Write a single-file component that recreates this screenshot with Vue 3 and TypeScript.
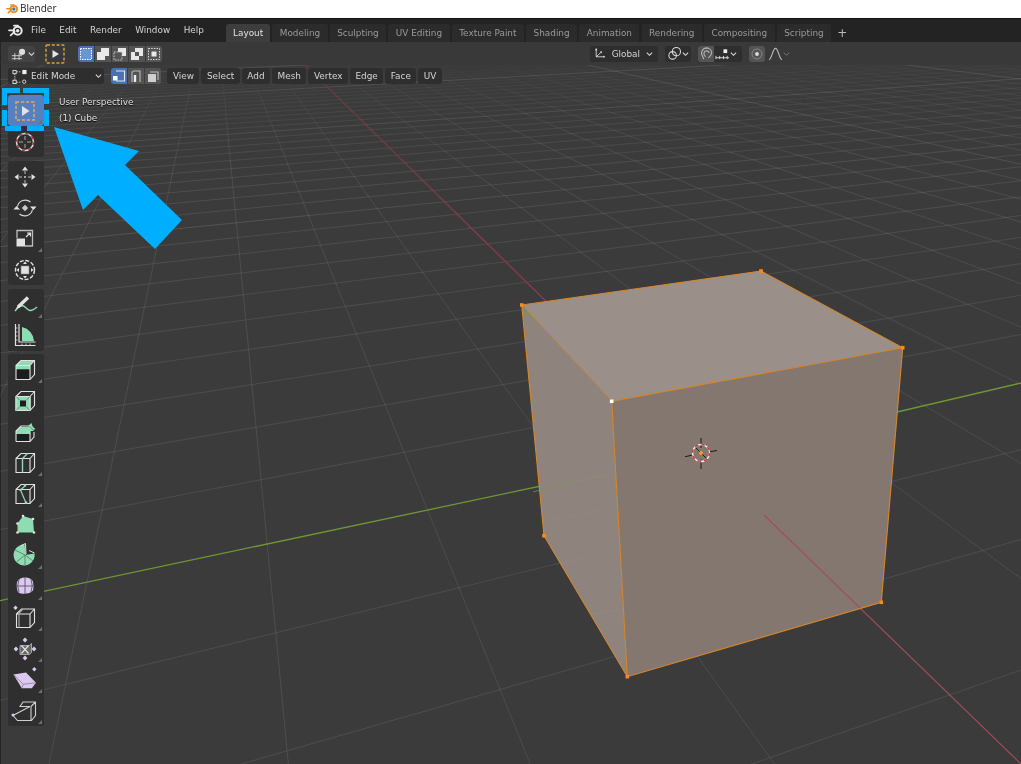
<script setup lang="ts">
// ground plane to screen homography, fitted on the axes and grid crossings
const project = (u: number, v: number) => {
  const w = 1 + 0.0504 * u - 0.1126 * v
  return { x: (701 + 158 * u - 23.98 * v) / w, y: (453 - 3.5 * u + 2.36 * v) / w, w }
}

const buildGrid = () => {
  const buckets = new Map<string, string[]>()
  const add = (a: { x: number; y: number }, b: { x: number; y: number }, o: number) => {
    if (o < 0.012) return
    const key = o.toFixed(3)
    if (!buckets.has(key)) buckets.set(key, [])
    buckets.get(key)!.push(`M${a.x.toFixed(1)} ${a.y.toFixed(1)}L${b.x.toFixed(1)} ${b.y.toFixed(1)}`)
  }
  const alpha = (w: number, major: boolean) => {
    if (major) return Math.round(Math.max(0.05, 0.12 - w * 0.005) * 50) / 50
    const t = Math.min(1, Math.max(0, (w - 2.6) / 3))
    return Math.round(0.085 * (1 - t) * 100) / 100
  }
  for (let a = -15; a <= 120; a++) {
    for (let b = -130; b <= 7; b++) {
      const p = project(a, b)
      if (p.w < 0.2 || p.w > 9) continue
      const q1 = project(a + 1, b)
      const q2 = project(a, b + 1)
      if (q1.w > 0.2 && b !== 0) add(p, q1, alpha((p.w + q1.w) / 2, b % 10 === 0))
      if (q2.w > 0.2 && a !== 0) add(p, q2, alpha((p.w + q2.w) / 2, a % 10 === 0))
    }
  }
  return [...buckets].map(([o, segs]) => ({ d: segs.join(''), o }))
}

const grid = buildGrid()

const menus = ['File', 'Edit', 'Render', 'Window', 'Help']
const tabs = ['Layout', 'Modeling', 'Sculpting', 'UV Editing', 'Texture Paint', 'Shading', 'Animation', 'Rendering', 'Compositing', 'Scripting']
const editMenus = ['View', 'Select', 'Add', 'Mesh', 'Vertex', 'Edge', 'Face', 'UV']

const W = '#e2e2e2'
const G = '#90dcb2'
const P = '#dac8ee'
const wire = (c = W) => `<g fill="none" stroke="${c}" stroke-width="1.1"><path d="M6 10.5h14v14H6zM6 10.5l5-5h13.5v14l-4.5 5M20 10.5l4.5-5"/></g>`
const dot = (x: number, y: number, c = W, r = 1.3) => `<circle cx="${x}" cy="${y}" r="${r}" fill="${c}"/>`
const diamond = (x: number, y: number, c = P, r = 2.4) => `<path d="M${x} ${y - r}l${r} ${r}-${r} ${r}-${r}-${r}z" fill="${c}"/>`

interface Tool {
  icon: string
  more?: boolean
  active?: boolean
}

const groups: Tool[][] = [
  [
    {
      active: true,
      more: true,
      icon: `<rect x="6" y="6" width="18" height="18" fill="none" stroke="#e0a95a" stroke-width="1.5" stroke-dasharray="3.2 1.8"/><path d="M12 10l7.5 5-7.5 5z" fill="#e4e4e4"/>`,
    },
    {
      icon: `<circle cx="15" cy="15" r="8.5" fill="none" stroke="#dcdcdc" stroke-width="1.5"/><circle cx="15" cy="15" r="8.5" fill="none" stroke="#a83a3a" stroke-width="1.6" stroke-dasharray="3 3.7"/><path d="M15 9v4M15 17v4M9 15h4M17 15h4" stroke="#aaa" stroke-width="1"/>`,
    },
  ],
  [
    {
      icon: `<path d="M15 4.5l3 4h-6zM15 25.5l3-4h-6zM4.5 15l4-3v6zM25.5 15l-4-3v6z" fill="${W}"/><path d="M15 9v3M15 18v3M9 15h3M18 15h3" stroke="#bbb" stroke-width="1"/>${dot(15, 15, '#ccc', 1)}`,
    },
    {
      icon: `<path d="M7.5 13.5a8 8 0 0 1 13-4.5M22.5 16.5a8 8 0 0 1-13 4.5" fill="none" stroke="#d8d8d8" stroke-width="1.2"/><path d="M23.5 17l-3.5-3.5h6.5zM6.5 13l3.5 3.5H3.5z" fill="${W}"/>${diamond(15, 15, '#c8c8c8', 3.2)}`,
    },
    {
      more: true,
      icon: `<path d="M7 14V6.5h15.5V22H15" fill="none" stroke="#bdbdbd" stroke-width="1.3"/><rect x="6.5" y="14.5" width="8.5" height="8" fill="${W}"/><path d="M16 13l4-4M17 9h3.5v3.5" fill="none" stroke="${W}" stroke-width="1.2"/>`,
    },
    {
      icon: `<circle cx="15" cy="15" r="9.5" fill="none" stroke="#e2e2e2" stroke-width="1.4" stroke-dasharray="4 1.6"/><rect x="11" y="11" width="8" height="8" fill="${W}" stroke="#888" stroke-width=".6"/><path d="M15 6.5l2 2.5h-4zM15 23.5l2-2.5h-4zM6.5 15l2.5-2v4zM23.5 15l-2.5-2v4z" fill="${W}"/>`,
    },
  ],
  [
    {
      more: true,
      icon: `<path d="M5 21C8 17 12 14 15 17S20 23 27 17" fill="none" stroke="${G}" stroke-width="1.4"/><path d="M8 17L18 7.5" stroke="${W}" stroke-width="3.4"/><path d="M5.5 19.5l2-3.5 1.6 1.6z" fill="${W}"/>`,
    },
    {
      icon: `<path d="M12 6A15 15 0 0 1 24 20H12z" fill="${G}"/><path d="M5.5 3v21.5h20M9 3v18h16.5" fill="none" stroke="${W}" stroke-width="1.2"/><path d="M5.5 7h2M5.5 11h2M5.5 15h2M5.5 19h2M12 22.5v2M16 22.5v2M20 22.5v2" stroke="${W}" stroke-width=".8"/>`,
    },
  ],
  [
    {
      more: true,
      icon: `<path d="M6 10.5l5-5h13.5L20 10.5zM6 10.5h14v4H6z" fill="${G}"/><rect x="6" y="14.5" width="14" height="10" fill="#1c1c1c"/>${wire()}`,
    },
    {
      icon: `${wire()}<rect x="6" y="10.5" width="14" height="14" fill="${G}" stroke="${W}" stroke-width="1"/><rect x="10" y="14.5" width="6" height="6" fill="#1e1e1e"/><path d="M6 10.5l4 4M20 10.5l-4 4M6 24.5l4-4M20 24.5l-4-4" stroke="#555" stroke-width=".6"/>`,
    },
    {
      icon: `<path d="M6 14l4-4h10l4 4z" fill="${G}"/><rect x="6" y="14" width="14" height="3" fill="${G}"/><rect x="6" y="17" width="14" height="7.5" fill="#1c1c1c"/><path d="M6 24.5V14l5-5h9M6 24.5h14V14M20 24.5l4-4.5v-5" fill="none" stroke="${W}" stroke-width="1.1"/><path d="M18 9l3.5-3 1.5 5z" fill="${G}"/><path d="M21 9.5l3.5 3" stroke="${G}" stroke-width="2"/>`,
    },
    {
      more: true,
      icon: `<path d="M6 10.5h14v14H6zM6 10.5l5-5h13.5v14l-4.5 5M20 10.5l4.5-5" fill="none" stroke="${W}" stroke-width="1.1"/><path d="M12.5 10.5v14M12.5 10.5l5-5" fill="none" stroke="${G}" stroke-width="1.4"/>`,
    },
    {
      more: true,
      icon: `${wire()}<path d="M15 7l-4.5 4L16 24" fill="none" stroke="${G}" stroke-width="1.2"/>${dot(15, 6.5, G, 1.3)}${dot(10.5, 11, G, 1.2)}${dot(16, 23.5, G, 1.3)}`,
    },
    {
      icon: `<path d="M7.5 13.5l5.5-7.5 10 3 1 13.5H7.5z" fill="${G}"/>${dot(7.5, 13.5)}${dot(13, 6)}${dot(23, 9)}${dot(24, 22.5)}${dot(7.5, 22.5)}`,
    },
    {
      more: true,
      icon: `<path d="M15 14L24.5 12.5A10.5 10.5 0 1 1 14.5 3.5L16 14z" fill="${G}"/><path d="M15 14L5 9M15 14L6.5 21M15 14v10M15 14l8 6" stroke="#4d7a63" stroke-width=".8"/><path d="M11 4.5L15.5 2.5 16 13M19 9.5L24.5 12" fill="none" stroke="${W}" stroke-width="1"/>`,
    },
    {
      more: true,
      icon: `<path d="M7 10Q9 5.5 15 5.5T23 9.5Q24 15 23 18.5 20 22 15 21.5 9 22.5 7.5 19 6 14 7 10z" fill="${P}"/><path d="M15 5.5v16M6.8 14h16.6M9 7Q6.5 14 9 20M21 7Q23.5 14 21 20" fill="none" stroke="#5c5068" stroke-width=".9"/>`,
    },
    {
      more: true,
      icon: `<g fill="none" stroke="${W}" stroke-width="1.1"><path d="M6.5 11h13.5v13.5H6.5zM6.5 11l5-5h13v13.5l-4.5 5M20 11l4.5-5"/><path d="M9 24.5V10l4-4" stroke="#aaa"/></g>${diamond(5.5, 4.7, P, 2.2)}`,
    },
    {
      more: true,
      icon: `<path d="M10 11.5h9.5l2-2v9l-2 2H10z" fill="#666" stroke="#bbb" stroke-width=".8"/><path d="M11.5 11.5l7 8M18.5 11.5l-7 8" stroke="${W}" stroke-width="1.2"/>${diamond(15, 6, P)}${diamond(15, 24, P)}${diamond(6, 15, P)}${diamond(24, 15, P)}`,
    },
    {
      more: true,
      icon: `<path d="M3.5 9.5L16 7.5l10 10.2-4.2 5.6h-10z" fill="${P}"/><path d="M3.5 9.5L13.3 19.3 26 17.7M13.3 19.3l-1.6 4" fill="none" stroke="#8a7a9c" stroke-width=".8"/>${diamond(24.3, 4.3, P, 2.2)}`,
    },
    {
      more: true,
      icon: `<path d="M10 10.5L13 6h12.5v13.5L21.5 24.5H7.5L3 19.5 20 10.5H10zM21 10.5L25.5 6M21 10.5v14" fill="none" stroke="#d0d0d0" stroke-width="1.1"/>${dot(3, 19, P, 1.5)}`,
    },
  ],
]
</script>

<template>
  <div class="app">
    <div class="titlebar">
      <svg class="title-logo" viewBox="0 0 24 24" width="13" height="13">
        <circle cx="14.5" cy="13" r="6" fill="none" stroke="#f08a1d" stroke-width="3.2" />
        <circle cx="14.5" cy="13" r="3.2" fill="#3f78b8" />
        <path d="M1.5 12.5h8M9 5.5h6M4 20l6-5.5" stroke="#f08a1d" stroke-width="2.8" stroke-linecap="round" />
      </svg>
      <span>Blender</span>
    </div>

    <div class="topbar">
      <div class="menus">
        <svg class="logo" viewBox="0 0 24 24" width="16" height="16">
          <circle cx="14.5" cy="13" r="6" fill="none" stroke="#e8e8e8" stroke-width="3" />
          <circle cx="14.5" cy="13" r="2.6" fill="#e8e8e8" />
          <path d="M1.5 12.5h8M9 5.5h6M4 20l6-5.5" stroke="#e8e8e8" stroke-width="2.6" stroke-linecap="round" />
        </svg>
        <span v-for="m in menus" :key="m" class="menu">{{ m }}</span>
      </div>
      <div class="tabs">
        <span v-for="(t, i) in tabs" :key="t" :class="['tab', { on: i === 0 }]">{{ t }}</span>
        <span class="tab plus">+</span>
      </div>
    </div>

    <div class="viewport">
      <svg class="canvas" viewBox="0 42 1021 722" width="1021" height="722">
        <defs>
          <linearGradient id="redfade" gradientUnits="userSpaceOnUse" x1="305" y1="65" x2="480" y2="235">
            <stop offset="0" stop-color="#8c3a4b" stop-opacity="0.4" />
            <stop offset="1" stop-color="#8c3a4b" />
          </linearGradient>
          <clipPath id="cubeclip">
            <path d="M521.7 305L761 271 902.7 347.7 881.3 602.3 627.3 676.7 544 535.7z" />
          </clipPath>
        </defs>
        <path v-for="g in grid" :key="g.o" :d="g.d" stroke="#fff" :stroke-opacity="g.o" stroke-width="1" fill="none" />
        <path d="M305 65L560 315" stroke="url(#redfade)" stroke-width="1.2" />
        <path d="M-2 601L560 482" stroke="#6f9732" stroke-width="1.3" />
        <path d="M880 416L1021 383" stroke="#6f9732" stroke-width="1.3" />

        <path d="M521.7 305L611.7 401.3 627.3 676.7 544 535.7z" fill="#8e847d" />
        <path d="M611.7 401.3L902.7 347.7 881.3 602.3 627.3 676.7z" fill="#84776f" />
        <path d="M521.7 305L761 271 902.7 347.7 611.7 401.3z" fill="#9a8f89" />

        <g clip-path="url(#cubeclip)" stroke="#fff" stroke-opacity="0.035" fill="none">
          <path d="M544 566L611 554M560 621L620 609M553 520L612 508" />
          <path d="M571 482L612 474" stroke="#8fa05a" stroke-opacity="0.35" />
        </g>
        <path d="M764 515L1021 764" stroke="#a34d5b" stroke-width="1.2" />
        <path d="M533 492L572 481" stroke="#7f9346" stroke-opacity="0.7" stroke-width="1" />

        <g stroke="#d6872a" stroke-width="1.1" fill="none">
          <path d="M521.7 305L761 271 902.7 347.7 881.3 602.3 627.3 676.7 544 535.7zM611.7 401.3L902.7 347.7M611.7 401.3L627.3 676.7" />
          <path d="M521.7 305L611.7 401.3" stroke-width="0.7" />
        </g>
        <g fill="#ff8a12">
          <rect x="520" y="303.2" width="3.6" height="3.6" />
          <rect x="759.2" y="269.2" width="3.6" height="3.6" />
          <rect x="900.9" y="345.9" width="3.6" height="3.6" />
          <rect x="542.2" y="533.9" width="3.6" height="3.6" />
          <rect x="625.5" y="674.9" width="3.6" height="3.6" />
          <rect x="879.5" y="600.5" width="3.6" height="3.6" />
        </g>
        <rect x="609.9" y="399.5" width="3.6" height="3.6" fill="#fff" />

        <g fill="none">
          <path d="M701 438v10M701 459.5v9.5M685 456.7l8-1.7M708 452l9-1.5M695 447l13 13" stroke="#1c1c1c" stroke-width="1" />
          <circle cx="701" cy="453" r="8.5" stroke="#eee" stroke-width="1.4" />
          <circle cx="701" cy="453" r="8.5" stroke="#d03a3a" stroke-width="1.5" stroke-dasharray="3.4 3.3" />
        </g>
        <circle cx="701" cy="453" r="2" fill="#f59a1e" />
      </svg>

      <div class="layer">
        <div class="tool-header">
          <div class="btn editor">
            <svg viewBox="0 0 20 14" width="18" height="14">
              <path d="M1 9h12M1 12.5h12M4.5 6v8M9.5 6v8" stroke="#ddd" stroke-width="1" fill="none" />
              <circle cx="13" cy="4.5" r="3.6" fill="#ddd" />
            </svg>
            <svg class="chev" viewBox="0 0 8 6" width="7" height="6"><path d="M1 1.5l3 3 3-3" fill="none" stroke="#ddd" stroke-width="1.2" /></svg>
          </div>
          <svg class="cur-tool" viewBox="0 0 20 20" width="20" height="20">
            <rect x="1" y="1" width="18" height="18" rx="1" fill="none" stroke="#e0a040" stroke-width="1.4" stroke-dasharray="3 1.8" />
            <path d="M7.5 6l6.5 4-6.5 4z" fill="#e4e4e4" />
          </svg>
          <div class="seg">
            <span class="seg-btn on">
              <svg viewBox="0 0 14 14" width="14" height="14"><rect x="1.5" y="1.5" width="11" height="11" fill="#6a94d8" stroke="#fff" stroke-dasharray="1.5 1" /></svg>
            </span>
            <span class="seg-btn">
              <svg viewBox="0 0 14 14" width="14" height="14"><path d="M5 1h8v8H9v4H1V5h4z" fill="#e8e8e8" /></svg>
            </span>
            <span class="seg-btn">
              <svg viewBox="0 0 14 14" width="14" height="14"><path d="M5 1h8v8H9V5H5z" fill="#e8e8e8" /><path d="M1 5h8v8H1z" fill="none" stroke="#ccc" stroke-dasharray="1.5 1.2" /></svg>
            </span>
            <span class="seg-btn">
              <svg viewBox="0 0 14 14" width="14" height="14"><path d="M1 5h8v8H1z" fill="#e8e8e8" /><path d="M5 1h8v8H9V5H5z" fill="#e8e8e8" /><rect x="5" y="5" width="4" height="4" fill="#555" /></svg>
            </span>
            <span class="seg-btn">
              <svg viewBox="0 0 14 14" width="14" height="14"><rect x="1.5" y="1.5" width="11" height="11" fill="none" stroke="#ddd" stroke-dasharray="1.5 1.2" /><rect x="4.5" y="4.5" width="5" height="5" fill="#e8e8e8" /></svg>
            </span>
          </div>

          <div class="right">
            <div class="btn global">
              <svg viewBox="0 0 16 16" width="15" height="15">
                <path d="M3 1v11.5h12M3 12.5L10 6" stroke="#ddd" stroke-width="1.2" fill="none" />
                <path d="M1.2 3.5L3 1l1.8 2.5zM13 10.7l2 1.8-2 1.8zM8 5.5l3-.5-.7 3z" fill="#ddd" />
              </svg>
              <span>Global</span>
              <svg class="chev" viewBox="0 0 8 6" width="7" height="6"><path d="M1 1.5l3 3 3-3" fill="none" stroke="#ddd" stroke-width="1.2" /></svg>
            </div>
            <div class="btn pivot">
              <svg viewBox="0 0 16 16" width="15" height="15">
                <circle cx="6" cy="10" r="4" fill="none" stroke="#ddd" stroke-width="1.1" />
                <circle cx="10" cy="6" r="4.4" fill="none" stroke="#ddd" stroke-width="1.1" />
              </svg>
              <svg class="chev" viewBox="0 0 8 6" width="7" height="6"><path d="M1 1.5l3 3 3-3" fill="none" stroke="#ddd" stroke-width="1.2" /></svg>
            </div>
            <div class="btn snap">
              <span class="snap-on">
                <svg viewBox="0 0 16 16" width="15" height="15"><path d="M5 14L3.2 9.5A5.5 5.5 0 0 1 8 2a5.5 5.5 0 0 1 5.5 5.2c0 2.5-2 4-3.5 5.5M7 11.5c-1.5-1-2-2.5-1.7-4.2A2.8 2.8 0 0 1 8 5a2.8 2.8 0 0 1 2.7 2.5" fill="none" stroke="#b8b8b8" stroke-width="1.2" /></svg>
              </span>
              <svg viewBox="0 0 16 14" width="15" height="14">
                <path d="M1 9v3.5M1 11h14M5 9v3.5M9 9v3.5M13 9v3.5" stroke="#ddd" stroke-width="1" fill="none" />
                <rect x="9" y="2" width="4" height="4" fill="#eee" />
              </svg>
              <svg class="chev" viewBox="0 0 8 6" width="7" height="6"><path d="M1 1.5l3 3 3-3" fill="none" stroke="#ddd" stroke-width="1.2" /></svg>
            </div>
            <div class="prop">
              <span class="prop-on">
                <svg viewBox="0 0 14 14" width="14" height="14"><circle cx="7" cy="7" r="5" fill="none" stroke="#888" stroke-width="1" /><circle cx="7" cy="7" r="1.9" fill="#ddd" /></svg>
              </span>
              <svg viewBox="0 0 16 14" width="15" height="14"><path d="M1 13C4 13 5 1 8 1s4 12 7 12" fill="none" stroke="#bbb" stroke-width="1.1" /></svg>
              <svg class="chev dim" viewBox="0 0 8 6" width="7" height="6"><path d="M1 1.5l3 3 3-3" fill="none" stroke="#777" stroke-width="1.1" /></svg>
            </div>
          </div>
        </div>

        <div class="mode-bar">
          <div class="btn mode">
            <svg viewBox="0 0 16 16" width="15" height="15">
              <path d="M3 5v7M5 3h5M5 14h5" stroke="#ccc" stroke-width="1" fill="none" stroke-dasharray="1.5 1" />
              <rect x="1" y="1.5" width="3.5" height="3.5" fill="none" stroke="#ddd" />
              <rect x="11" y="1" width="4.5" height="4.5" fill="#eee" />
              <rect x="1" y="12" width="3.5" height="3.5" fill="none" stroke="#ddd" />
              <circle cx="13" cy="13.5" r="1.8" fill="none" stroke="#ddd" />
            </svg>
            <span class="mode-label">Edit Mode</span>
            <svg class="chev" viewBox="0 0 8 6" width="7" height="6"><path d="M1 1.5l3 3 3-3" fill="none" stroke="#ddd" stroke-width="1.2" /></svg>
          </div>
          <div class="seg sel">
            <span class="seg-btn on">
              <svg viewBox="0 0 14 14" width="14" height="14"><path d="M3 2h8.5v10H3" fill="none" stroke="#e6e6e6" stroke-width="1.1" transform="translate(1 0)" /><rect x="1" y="7" width="4.5" height="4.5" fill="#fff" /></svg>
            </span>
            <span class="seg-btn">
              <svg viewBox="0 0 14 14" width="14" height="14"><path d="M3 13V4q0-2 2-2h6v11" fill="none" stroke="#bbb" stroke-width="1.1" /><path d="M6 6v7" stroke="#eee" stroke-width="2.4" /></svg>
            </span>
            <span class="seg-btn">
              <svg viewBox="0 0 14 14" width="14" height="14"><path d="M4 3h8v8" fill="none" stroke="#bbb" stroke-width="1.1" /><rect x="2" y="5" width="8" height="8" fill="#cfcfcf" /></svg>
            </span>
          </div>
          <div class="edit-menus">
            <span v-for="m in editMenus" :key="m" class="edit-menu">{{ m }}</span>
          </div>
        </div>

        <div class="work">
          <div class="toolbar">
            <div v-for="(grp, gi) in groups" :key="gi" class="tool-group">
              <div v-for="(t, ti) in grp" :key="ti" :class="['tool', { active: t.active, more: t.more }]">
                <svg viewBox="0 0 30 30" width="30" height="30" v-html="t.icon"></svg>
              </div>
            </div>
          </div>
          <div class="info">
            <div>User Perspective</div>
            <div>(1) Cube</div>
          </div>
        </div>
      </div>

      <!-- tutorial marker over the select box tool -->
      <svg class="marker" viewBox="0 42 1021 722" width="1021" height="722">
        <g fill="#00aeff">
          <rect x="2" y="88" width="18" height="5" />
          <rect x="23" y="88" width="26" height="5" />
          <rect x="2" y="93" width="5" height="12" />
          <rect x="44" y="93" width="5" height="11" />
          <rect x="2" y="110" width="5" height="16" />
          <rect x="44" y="110" width="5" height="16" />
          <rect x="5" y="126" width="16" height="5" />
          <rect x="27" y="126" width="17" height="5" />
          <path d="M54 127L139 151 125 165 182 220 155 249 98 195 83 210z" />
        </g>
      </svg>
    </div>
  </div>
</template>

<style scoped>
.app {
  width: 1021px;
  height: 764px;
  display: flex;
  flex-direction: column;
  overflow: hidden;
  font-family: "DejaVu Sans", sans-serif;
  font-size: 8.9px;
  color: #d4d4d4;
  filter: blur(0.35px);
}

.titlebar {
  height: 18px;
  flex: none;
  background: #fff;
  border-bottom: 1px solid #111;
  display: flex;
  align-items: center;
  gap: 1px;
  padding-left: 6px;
  box-sizing: content-box;
  font-family: "Open Sans", sans-serif;
  font-size: 10px;
  color: #222;
}

.title-logo,
.titlebar span {
  margin-top: -2px;
}

.topbar {
  height: 23px;
  flex: none;
  background: #232323;
  display: flex;
}

.menus {
  flex: 0 0 226px;
  display: flex;
  align-items: center;
  gap: 13.5px;
  padding: 0 0 1px 8px;
  box-sizing: border-box;
}

.logo {
  margin-right: -6.5px;
}

.tabs {
  display: flex;
  align-items: flex-end;
  gap: 2.1px;
}

.tab {
  height: 18px;
  display: flex;
  align-items: center;
  padding: 0 7.5px;
  border-radius: 3px 3px 0 0;
  background: #2b2b2b;
  color: #9a9a9a;
}

.tab.on {
  background: #3d3d3d;
  color: #e0e0e0;
  padding: 0 7px;
}

.tab.plus {
  background: none;
  color: #bbb;
  font-size: 12px;
  padding: 0 4px;
}

.viewport {
  position: relative;
  flex: 1;
  background: #3b3b3b;
  border-left: 1px solid #252525;
  box-sizing: border-box;
}

.canvas,
.marker {
  position: absolute;
  left: -1px;
  top: 0;
}

.marker {
  pointer-events: none;
}

.layer {
  position: relative;
}

.tool-header {
  height: 23px;
  background: #393939;
  display: flex;
  align-items: center;
  padding: 0 227px 0 7px;
}

.btn {
  height: 16px;
  display: flex;
  align-items: center;
  background: #2e2e2e;
  border-radius: 3px;
  box-sizing: border-box;
}

.chev {
  flex: none;
}

.editor {
  width: 27px;
  padding-left: 3px;
  background: #434343;
}

.cur-tool {
  margin-left: 10px;
}

.seg {
  display: flex;
  margin-left: 13px;
  gap: 1px;
}

.seg-btn {
  width: 16px;
  height: 16px;
  background: #545454;
  display: flex;
  align-items: center;
  justify-content: center;
}

.seg-btn:first-child {
  border-radius: 3px 0 0 3px;
}

.seg-btn:last-child {
  border-radius: 0 3px 3px 0;
}

.seg-btn.on {
  background: #4772b3;
}

.right {
  margin-left: auto;
  display: flex;
  align-items: center;
  gap: 7px;
}

.global {
  width: 68px;
  padding: 0 5px 0 4px;
  gap: 6px;
  justify-content: space-between;
}

.pivot {
  width: 26px;
  padding-left: 2px;
}

.snap {
  width: 44px;
}

.snap-on {
  width: 16px;
  height: 16px;
  background: #545454;
  border-radius: 3px 0 0 3px;
  display: flex;
  align-items: center;
  justify-content: center;
  margin-right: 1px;
}

.prop {
  display: flex;
  align-items: center;
  width: 45px;
}

.prop-on {
  width: 16px;
  height: 16px;
  background: #545454;
  border-radius: 3px;
  display: flex;
  align-items: center;
  justify-content: center;
  margin-right: 3px;
}

.mode-bar {
  height: 22px;
  display: flex;
  align-items: center;
  padding-left: 7px;
}

.mode {
  width: 96px;
  padding: 0 2px 0 4px;
}

.mode-label {
  margin-left: 4px;
  flex: 1;
}

.sel {
  margin-left: 7px;
}

.sel .seg-btn {
  width: 16.3px;
}

.sel.seg {
  gap: 0.5px;
}

.edit-menus {
  display: flex;
  margin-left: 6px;
  gap: 2px;
}

.edit-menu {
  height: 16px;
  padding: 0 5.5px;
  display: flex;
  align-items: center;
  background: #2e2e2e;
  border-radius: 3px;
}

.edit-menu:first-child {
  padding-left: 6px;
}

.work {
  display: flex;
  padding: 8px 0 0 7px;
}

.toolbar {
  width: 36px;
  display: flex;
  flex-direction: column;
  gap: 4px;
}

.tool-group {
  background: #2f2f2f;
  border-radius: 3px;
}

.tool-group:last-child {
  margin-top: -1px;
}

.tool {
  position: relative;
  height: 31px;
  display: flex;
  align-items: center;
  justify-content: center;
}

.tool > svg {
  margin-left: -2px;
}

.tool.active {
  background: #5680c2;
  border-radius: 3px;
}

.tool.more::after {
  content: "";
  position: absolute;
  right: 2px;
  bottom: 2px;
  border-style: solid;
  border-width: 0 0 4px 4px;
  border-color: transparent transparent #707070 transparent;
}

.info {
  margin: -1px 0 0 15px;
  line-height: 16px;
  color: #e0e0e0;
  text-shadow: 0 1px 1px #000;
}
</style>

<style>
body {
  background: #3b3b3b;
}
</style>
